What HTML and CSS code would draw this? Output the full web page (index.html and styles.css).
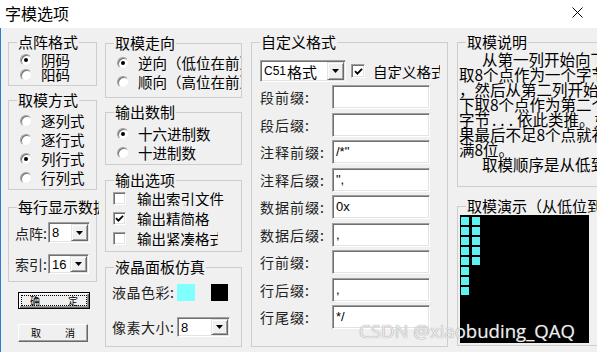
FILE: index.html
```html
<!DOCTYPE html>
<html lang="zh-CN">
<head>
<meta charset="utf-8">
<title>字模选项</title>
<link rel="stylesheet" href="styles.css">
</head>
<body>
<div class="titlebar">
  <span class="title">字模选项</span>
  <svg class="close" width="11" height="11" viewBox="0 0 11 11"><path d="M0.5 0.5L10.5 10.5M10.5 0.5L0.5 10.5" stroke="#000" stroke-width="1" fill="none"/></svg>
</div>
<div class="dialog">
  <div class="col col1">
    <fieldset class="group g11">
      <legend>点阵格式</legend>
      <div class="gbody pad-r1">
        <div class="opt h15"><span class="radio on"></span><span class="txt">阴码</span></div>
        <div class="opt h15"><span class="radio"></span><span class="txt">阳码</span></div>
      </div>
    </fieldset>
    <fieldset class="group g12">
      <legend>取模方式</legend>
      <div class="gbody pad-r2">
        <div class="opt h19"><span class="radio"></span><span class="txt">逐列式</span></div>
        <div class="opt h19"><span class="radio"></span><span class="txt">逐行式</span></div>
        <div class="opt h19"><span class="radio on"></span><span class="txt">列行式</span></div>
        <div class="opt h19"><span class="radio"></span><span class="txt">行列式</span></div>
      </div>
    </fieldset>
    <fieldset class="group g13">
      <legend class="clip">每行显示数据</legend>
      <div class="gbody pad-c">
        <div class="crow">
          <span class="clabel">点阵:</span>
          <div class="combo sunken w42"><span class="val">8</span><span class="drop"><svg width="7" height="4" viewBox="0 0 7 4"><polygon points="0,0 7,0 3.5,4" fill="#000"/></svg></span></div>
        </div>
        <div class="crow second">
          <span class="clabel">索引:</span>
          <div class="combo sunken w41"><span class="val">16</span><span class="drop"><svg width="7" height="4" viewBox="0 0 7 4"><polygon points="0,0 7,0 3.5,4" fill="#000"/></svg></span></div>
        </div>
      </div>
    </fieldset>
    <div class="btn default"><span class="focus"><span>确</span><span>定</span></span></div>
    <div class="btn cancel"><span>取</span><span>消</span></div>
  </div>

  <div class="col col2">
    <fieldset class="group g21">
      <legend>取模走向</legend>
      <div class="gbody pad-r3">
        <div class="opt h19"><span class="radio on"></span><span class="txt">逆向（低位在前）</span></div>
        <div class="opt h19"><span class="radio"></span><span class="txt">顺向（高位在前）</span></div>
      </div>
    </fieldset>
    <fieldset class="group g22">
      <legend>输出数制</legend>
      <div class="gbody pad-r4">
        <div class="opt h19"><span class="radio on"></span><span class="txt">十六进制数</span></div>
        <div class="opt h19"><span class="radio"></span><span class="txt">十进制数</span></div>
      </div>
    </fieldset>
    <fieldset class="group g23">
      <legend>输出选项</legend>
      <div class="gbody pad-k">
        <div class="opt h20"><span class="check"></span><span class="ktxt">输出索引文件</span></div>
        <div class="opt h20"><span class="check"><svg width="9" height="9" viewBox="0 0 9 9"><path d="M1 4.2L3.4 6.6L8 1.8" stroke="#000" stroke-width="1.8" fill="none"/></svg></span><span class="ktxt w73">输出精简格式</span></div>
        <div class="opt h20"><span class="check"></span><span class="ktxt w81">输出紧凑格式</span></div>
      </div>
    </fieldset>
    <fieldset class="group g24">
      <legend>液晶面板仿真</legend>
      <div class="gbody pad-l">
        <div class="lrow">
          <span class="llabel">液晶色彩:</span>
          <span class="swatch cyan"></span>
          <span class="swatch black"></span>
        </div>
        <div class="lrow second">
          <span class="llabel">像素大小:</span>
          <div class="combo sunken w53"><span class="val">8</span><span class="drop"><svg width="7" height="4" viewBox="0 0 7 4"><polygon points="0,0 7,0 3.5,4" fill="#000"/></svg></span></div>
        </div>
      </div>
    </fieldset>
  </div>

  <div class="col col3">
    <fieldset class="group g31">
      <legend>自定义格式</legend>
      <div class="gbody pad-f">
        <div class="toprow">
          <div class="combo sunken w86"><span class="val"><span class="lat">C51</span>格式</span><span class="drop"><svg width="7" height="4" viewBox="0 0 7 4"><polygon points="0,0 7,0 3.5,4" fill="#000"/></svg></span></div>
          <span class="check big"><svg width="9" height="9" viewBox="0 0 9 9"><path d="M1 4.2L3.4 6.6L8 1.8" stroke="#000" stroke-width="1.8" fill="none"/></svg></span>
          <span class="ktxt w67">自定义格式</span>
        </div>
        <div class="frow"><span class="flabel">段前缀:</span><span class="field sunken"></span></div>
        <div class="frow"><span class="flabel">段后缀:</span><span class="field sunken"></span></div>
        <div class="frow"><span class="flabel">注释前缀:</span><span class="field sunken">/*"</span></div>
        <div class="frow"><span class="flabel">注释后缀:</span><span class="field sunken">",</span></div>
        <div class="frow"><span class="flabel">数据前缀:</span><span class="field sunken">0x</span></div>
        <div class="frow"><span class="flabel">数据后缀:</span><span class="field sunken">,</span></div>
        <div class="frow"><span class="flabel">行前缀:</span><span class="field sunken"></span></div>
        <div class="frow"><span class="flabel">行后缀:</span><span class="field sunken">,</span></div>
        <div class="frow"><span class="flabel">行尾缀:</span><span class="field sunken">*/</span></div>
      </div>
    </fieldset>
  </div>

  <div class="col col4">
    <fieldset class="group g41">
      <legend>取模说明</legend>
      <div class="desc">
        <div class="ind">从第一列开始向下</div>
        <div>取8个点作为一个字节</div>
        <div>，然后从第二列开始向</div>
        <div>下取8个点作为第二个</div>
        <div>字节<span class="dots">...</span>依此类推。如</div>
        <div>果最后不足8个点就补</div>
        <div>满8位。</div>
        <div class="ind">取模顺序是从低到高</div>
      </div>
    </fieldset>
    <fieldset class="group g42">
      <legend>取模演示（从低位到高位）</legend>
      <div class="screen">
        <div class="dcol">
          <span class="dot"></span><span class="dot"></span><span class="dot"></span><span class="dot"></span>
          <span class="dot"></span><span class="dot"></span><span class="dot"></span><span class="dot"></span>
        </div>
        <div class="dcol">
          <span class="dot"></span><span class="dot"></span><span class="dot"></span><span class="dot"></span>
          <span class="dot"></span>
        </div>
      </div>
    </fieldset>
  </div>
</div>
<div class="wm">CSDN @xiaobuding_QAQ</div>
</body>
</html>
```
FILE: styles.css
```css
* { box-sizing: border-box; }
html, body { margin: 0; padding: 0; }
body {
  width: 597px; height: 352px; overflow: hidden;
  background: #f0f0f0;
  font-family: "Noto Sans CJK SC", "Noto Sans", sans-serif;
  color: #000;
  position: relative;
}
.titlebar {
  height: 28px; background: #fff;
  display: flex; justify-content: space-between; align-items: flex-start;
  padding: 3px 14px 0 5px;
}
.title { font-size: 16px; line-height: 20px; }
.close { margin-top: 4px; display: block; }

.dialog {
  height: 324px;
  border-left: 1px solid #2b7bd6;
  display: flex; align-items: flex-start;
  padding: 6px 0 0 7px;
}
.col { display: flex; flex-direction: column; flex: none; }
.col1 { width: 89px; margin-right: 8px; }
.col2 { width: 137px; margin-right: 9px; margin-top: 1px; }
.col3 { width: 197px; margin-right: 9px; }
.col4 { width: 170px; }

.group {
  margin: 0; padding: 0;
  border: 1px solid #cdcdcd;
  min-width: 0; flex: none;
}
.group legend {
  margin-left: 8px; padding: 0 1px;
  font-size: 15px; line-height: 16px; height: 16px;
  white-space: nowrap;
}
.group legend.clip { max-width: 82px; overflow: hidden; }

.g11 { height: 52px; }
.g12 { height: 98px; margin-top: 6px; }
.g13 { height: 83px; margin-top: 9px; }
.g21 { height: 63px; }
.g22 { height: 61px; margin-top: 6px; }
.g23 { height: 80px; margin-top: 7px; }
.g24 { height: 88px; margin-top: 7px; }
.g31 { height: 313px; }
.g41 { height: 153px; }
.g42 { height: 148px; margin-top: 11px; }

.gbody { overflow: hidden; }
.pad-r1 { padding: 2px 0 0 11px; }
.pad-r2 { padding: 3px 0 0 11px; }
.pad-r3 { padding: 2px 0 0 11px; }
.pad-r4 { padding: 4px 0 0 11px; }
.pad-k { padding: 0 0 0 7px; }
.pad-c { padding: 7px 0 0 6px; }
.pad-l { padding: 7px 0 0 6px; }
.pad-f { padding: 10px 0 0 8px; }

.opt { display: flex; align-items: center; font-size: 14.5px; white-space: nowrap; }
.h15 { height: 15px; }
.h19 { height: 19px; }
.h20 { height: 20px; }
.txt { margin-left: 9px; line-height: 15px; }

.radio {
  width: 12px; height: 12px; border-radius: 50%;
  background: #fff;
  border: 1px solid; border-color: #a0a0a0 #ececec #ececec #a0a0a0;
  box-shadow: inset 1px 1px 0 #707070;
  flex: none;
  display: flex; align-items: center; justify-content: center;
}
.radio.on::after {
  content: ""; width: 4px; height: 4px; border-radius: 50%; background: #000;
}

.check {
  width: 13px; height: 13px; background: #fff;
  border: 1px solid; border-color: #a0a0a0 #fff #fff #a0a0a0;
  box-shadow: inset 1px 1px #707070, inset -1px -1px #e3e3e3;
  flex: none;
  display: flex; align-items: center; justify-content: center;
}
.check svg { display: block; }
.check.big { width: 14px; height: 14px; margin-left: 5px; }
.ktxt { margin-left: 11px; line-height: 15px; font-size: 14.5px; overflow: hidden; white-space: nowrap; flex: none; }
.w73 { width: 73px; }
.w81 { width: 81px; }
.w67 { width: 67px; margin-left: 8px; }

.sunken {
  background: #fff;
  border: 1px solid; border-color: #a0a0a0 #fff #fff #a0a0a0;
  box-shadow: inset 1px 1px #707070, inset -1px -1px #e3e3e3;
}
.combo { display: flex; padding: 1px; flex: none; }
.combo .val {
  flex: 1; display: flex; align-items: center;
  font-family: "Liberation Sans", sans-serif; font-size: 13px;
  padding-left: 2px; white-space: nowrap; overflow: hidden;
}
.combo .drop {
  width: 17px; flex: none; background: #f0f0f0;
  border: 1px solid; border-color: #e3e3e3 #696969 #696969 #e3e3e3;
  box-shadow: inset 1px 1px #fff, inset -1px -1px #a0a0a0;
  display: flex; align-items: center; justify-content: center;
}
.combo .drop svg { display: block; }
.w42 { width: 42px; height: 21px; }
.w41 { width: 41px; height: 20px; }
.w53 { width: 53px; height: 20px; }
.w86 { width: 86px; height: 22px; }
.lat { font-size: 12px; margin-right: 1px; }
.w86 .val { font-family: "Liberation Sans", "Noto Sans CJK SC", sans-serif; font-size: 15px; }
.w86 .val .lat { font-family: "Liberation Sans", sans-serif; font-size: 12px; }

.crow { display: flex; align-items: center; }
.crow.second { margin-top: 11px; }
.clabel { width: 33px; font-size: 14px; color: #222; white-space: nowrap; }

.lrow { display: flex; align-items: center; }
.lrow.second { margin-top: 15px; }
.llabel { width: 65px; font-size: 14px; color: #222; white-space: nowrap; letter-spacing: 0.5px; }
.swatch { display: block; width: 18px; height: 17px; flex: none; }
.swatch.cyan { background: #80ffff; }
.swatch.black { background: #000; margin-left: 16px; width: 17px; }

.toprow { display: flex; align-items: center; }
.frow { display: flex; align-items: center; height: 24px; margin-top: 3.5px; }
.toprow + .frow { margin-top: 3px; }
.flabel { width: 72px; font-size: 14px; color: #222; letter-spacing: 1px; white-space: nowrap; }
.field {
  display: block; width: 98px; height: 24px; padding: 1px 3px;
  font-family: "Liberation Sans", sans-serif; font-size: 13px; line-height: 20px;
}

.desc { padding: 2px 0 0 1px; font-size: 15.5px; line-height: 15px; white-space: nowrap; }
.desc .ind { padding-left: 23px; }
.dots { letter-spacing: 4px; margin-left: 2px; }

.screen {
  width: 129px; height: 128px; background: #000;
  margin: 1px 0 0 2px;
  display: flex; gap: 3px; padding: 2px 0 0 1px;
}
.dcol { display: flex; flex-direction: column; gap: 2px; }
.dot { display: block; width: 8px; height: 8px; background: #5ff2f2; }

.btn {
  width: 72px; height: 17px; margin-left: 10px;
  display: flex; align-items: center; justify-content: space-between;
  font-size: 10px; line-height: 10px;
  background: #f0f0f0;
  flex: none;
}
.btn.default {
  margin-top: 10px; padding: 2px;
  border: 1px solid #000;
  box-shadow: inset 1px 1px #fff, inset -1px -1px #696969, inset -2px -2px #a0a0a0;
}
.btn .focus {
  flex: 1; align-self: stretch;
  display: flex; align-items: center; justify-content: space-between;
  border: 1px dotted #000; padding: 0 8px;
}
.btn.cancel {
  margin-top: 15px; height: 18px; width: 70px; padding: 0 12px;
  border: 1px solid; border-color: #fff #696969 #696969 #fff;
  box-shadow: inset -1px -1px #a0a0a0;
}

.wm {
  position: absolute; left: 359px; top: 318px;
  font-family: "Open Sans", "Noto Sans", sans-serif; font-size: 18.6px;
  color: #ececec; text-shadow: 0 0 1px #777;
  white-space: nowrap;
}
```
